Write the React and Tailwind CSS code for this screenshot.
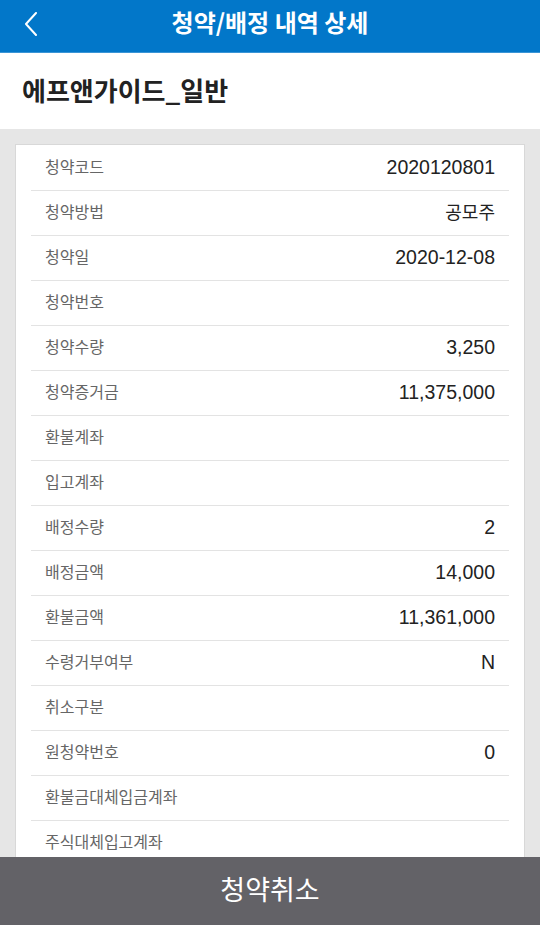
import React from "react";

const rows = [
  ["청약코드", "2020120801"],
  ["청약방법", "공모주"],
  ["청약일", "2020-12-08"],
  ["청약번호", ""],
  ["청약수량", "3,250"],
  ["청약증거금", "11,375,000"],
  ["환불계좌", ""],
  ["입고계좌", ""],
  ["배정수량", "2"],
  ["배정금액", "14,000"],
  ["환불금액", "11,361,000"],
  ["수령거부여부", "N"],
  ["취소구분", ""],
  ["원청약번호", "0"],
  ["환불금대체입금계좌", ""],
  ["주식대체입고계좌", ""],
];

export default function App() {
  return (
    <div
      className="w-[540px] h-[925px] overflow-hidden relative bg-[#e6e6e6]"
      style={{ fontFamily: '"Noto Sans CJK KR", "Noto Sans", sans-serif' }}
    >
      <div className="h-[53px] bg-[#0277c9] border-b border-[#3a95d6] flex items-center relative">
        <svg className="absolute left-[24px] top-[12px]" width="14" height="24" viewBox="0 0 14 24">
          <path d="M12 1 L2 12 L12 23" fill="none" stroke="white" strokeWidth="2" strokeLinecap="round" strokeLinejoin="round" />
        </svg>
        <div className="w-full text-center text-white text-[24px] font-bold leading-none pb-[8px]">청약/배정 내역 상세</div>
      </div>
      <div className="h-[76px] bg-white flex items-center px-[22px]">
        <span className="text-[26px] font-bold text-[#222] leading-none pb-[2px]">에프앤가이드_일반</span>
      </div>
      <div className="mx-[15px] mt-[15px] pt-[1px] bg-white border border-[#d8d8d8] px-[15px]">
        {rows.map(([k, v], i) => (
          <div key={i} className="h-[45px] flex items-center justify-between border-b border-[#e3e3e3] px-[14px]">
            <span className="text-[16px] text-[#666] leading-none pb-[4px]">{k}</span>
            {/^[0-9,\-N]+$/.test(v) ? (
              <span className="text-[19.5px] text-[#222] leading-none" style={{ fontFamily: '"Liberation Sans", Arial, sans-serif' }}>{v}</span>
            ) : (
              <span className="text-[18px] text-[#222] leading-none pb-[4px]">{v}</span>
            )}
          </div>
        ))}
      </div>
      <div className="absolute left-0 bottom-0 w-full h-[68px] bg-[#636267] flex items-center justify-center">
        <span className="text-white text-[27px] leading-none pb-[6px]">청약취소</span>
      </div>
    </div>
  );
}
